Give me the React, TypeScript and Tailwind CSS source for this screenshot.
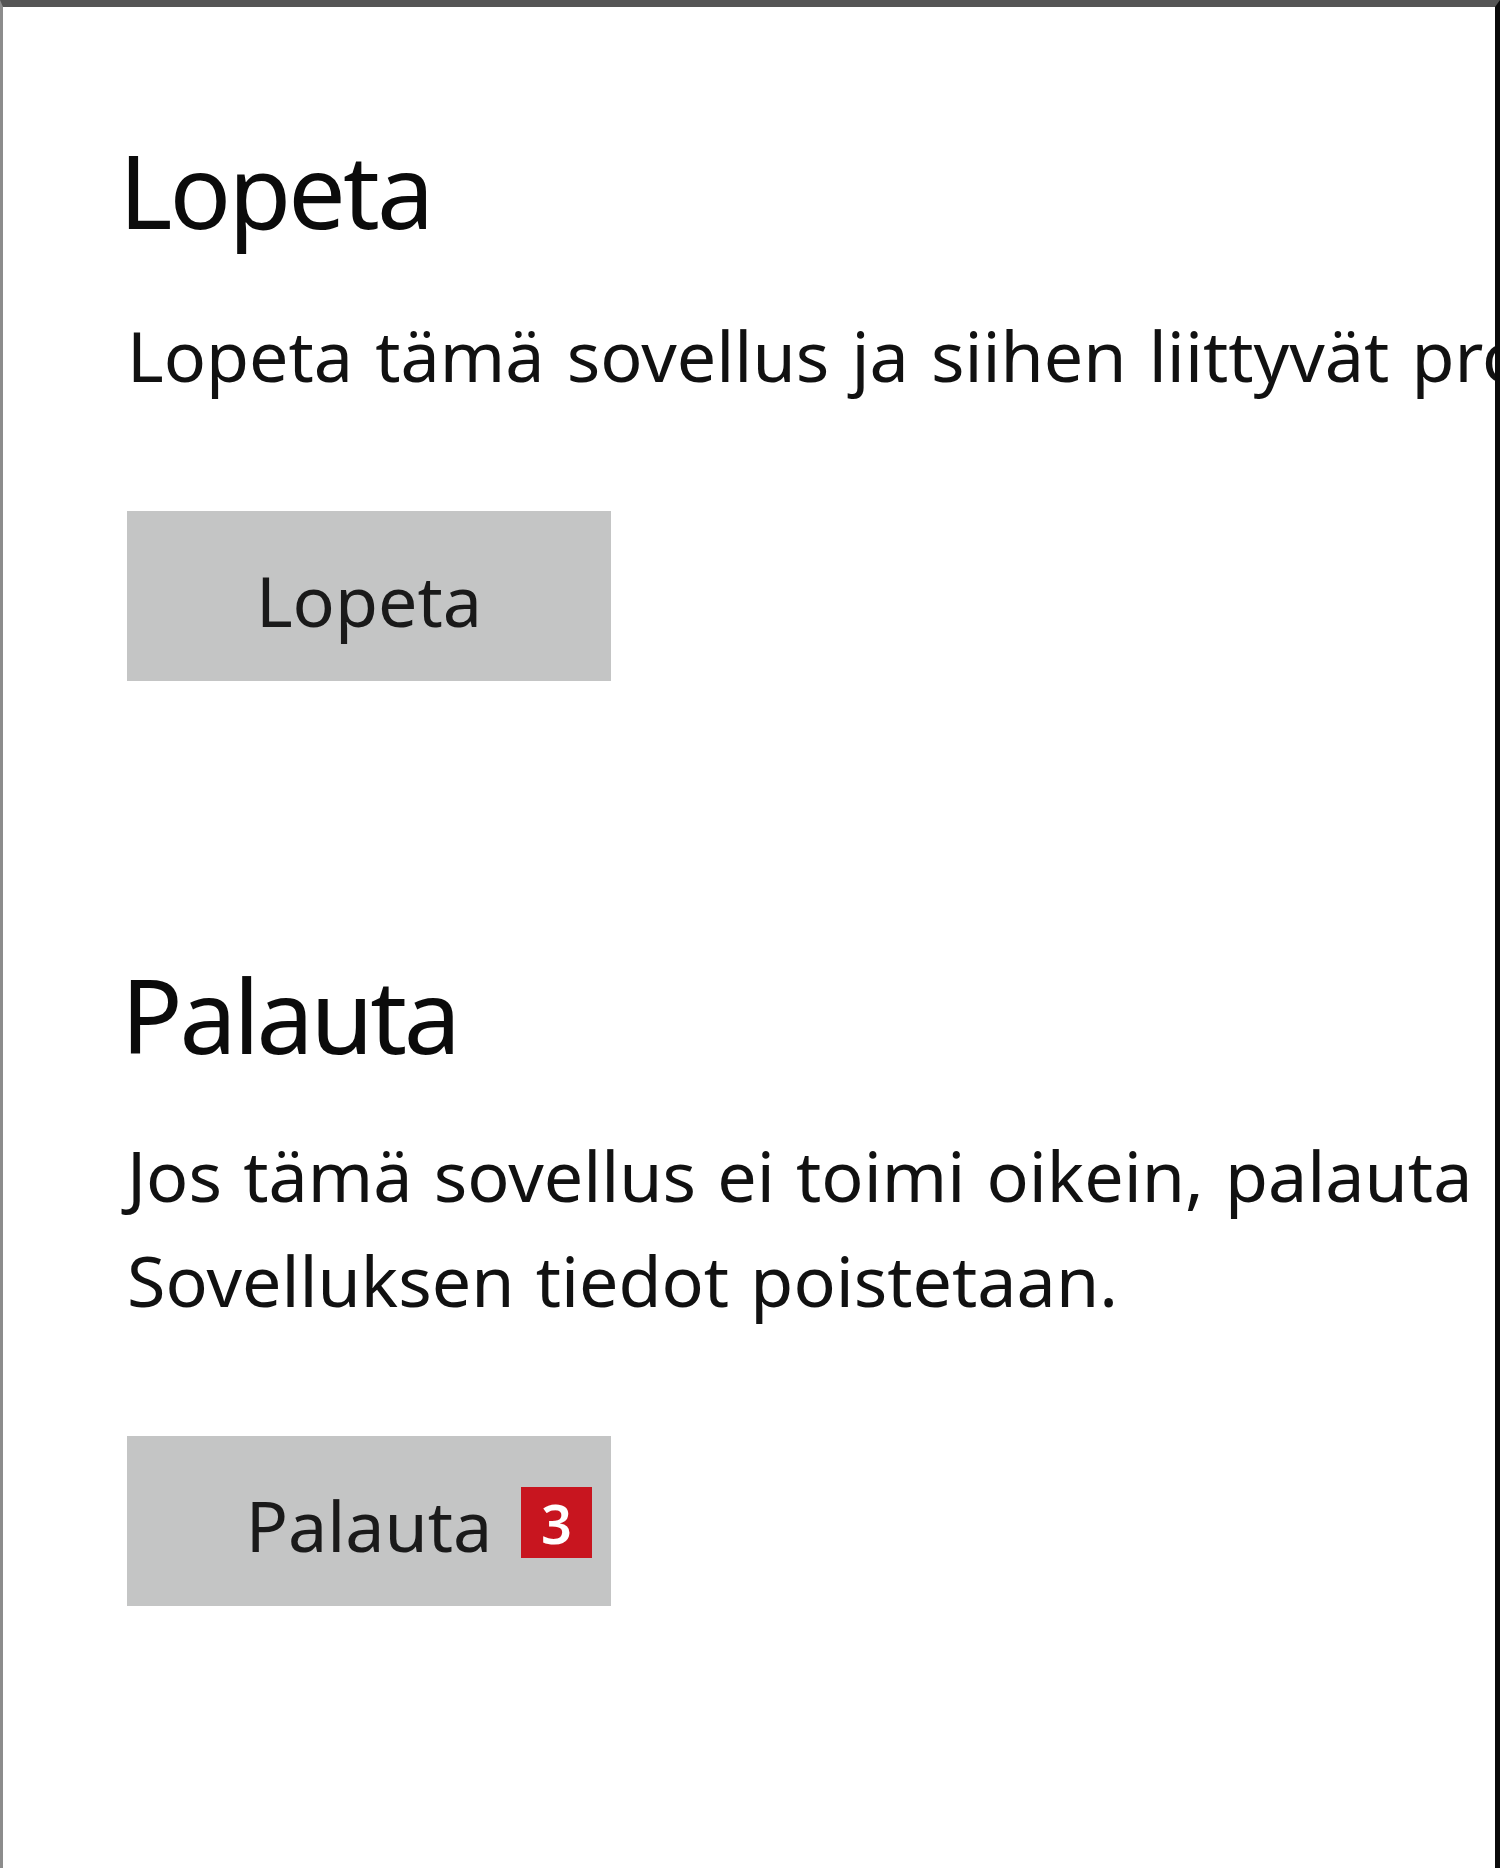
import React from "react";

const font = { fontFamily: '"Noto Sans", "Open Sans", sans-serif' };

export default function App() {
  return (
    <div
      className="w-[1500px] h-[1868px] overflow-hidden bg-white border-t-[7px] border-t-[#555555] border-l-[3px] border-l-[#8c8c8c] border-r-[5px] border-r-[#0a0a0a] text-black"
      style={font}
    >
      <div className="pl-[124px] pt-[132px] flex flex-col">
        <h1 className="text-[102px] leading-none font-normal tracking-[-0.028em] -ml-[8px] text-[#0b0b0b]">
          Lopeta
        </h1>
        <p className="mt-[62px] text-[70px] leading-[105px] [word-spacing:4px] whitespace-nowrap text-[#111]">
          Lopeta tämä sovellus ja siihen liittyvät prosessit.
        </p>
        <div className="mt-[103px]">
          <button className="w-[484px] h-[170px] bg-[#c4c5c5] flex items-center justify-center text-[70px] leading-none text-[#1a1a1a] pt-[8px]">
            Lopeta
          </button>
        </div>

        <h1 className="mt-[283px] text-[102px] leading-none font-normal tracking-[-0.032em] -ml-[6px] text-[#0b0b0b]">
          Palauta
        </h1>
        <p className="mt-[57px] text-[70px] leading-[105px] [word-spacing:3px] whitespace-nowrap text-[#111]">
          Jos tämä sovellus ei toimi oikein, palauta se.
          <br />
          Sovelluksen tiedot poistetaan.
        </p>
        <div className="mt-[103px]">
          <button className="relative w-[484px] h-[170px] bg-[#c4c5c5] flex items-center justify-center text-[70px] leading-none text-[#1a1a1a] pt-[8px]">
            Palauta
            <span className="absolute right-[19px] top-[51px] w-[71px] h-[71px] bg-[#c8151f] flex items-center justify-center text-white text-[54px] font-semibold leading-none">
              3
            </span>
          </button>
        </div>
      </div>
    </div>
  );
}
